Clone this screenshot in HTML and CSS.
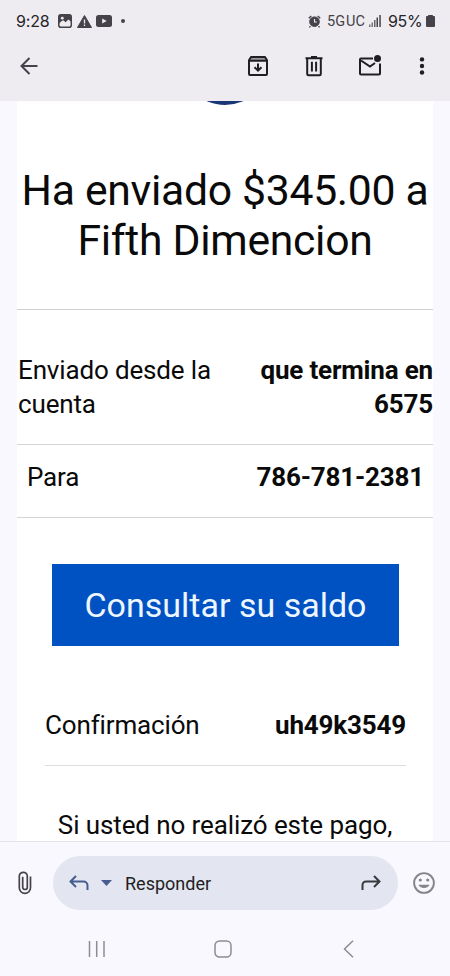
FILE: index.html
```html
<!DOCTYPE html>
<html lang="es">

<head>
    <meta charset="UTF-8">
    <meta name="viewport" content="width=device-width, initial-scale=1.0">
    <title>Correo</title>
    <link rel="stylesheet" href="styles.css">
</head>

<body>
    <header class="top">
        <div class="status-bar">
            <div class="status-left">
                <span class="clock">9:28</span>
                <svg class="icon-photo" width="14" height="14" viewBox="0 0 14 14">
                    <rect x="0.8" y="0.8" width="12.4" height="12.4" rx="2" fill="none" stroke="#454349" stroke-width="1.6"/>
                    <path d="M1 1h12v7l-2.500-2L8 8.500 5 6.500 1 10z" fill="#454349"/>
                    <circle cx="4.300" cy="4.200" r="1.400" fill="#eeecf1"/>
                    <path d="M1.800 11V8.800L5 6.300l2.600 2.200L10.300 5.500l2 1.800V11z" fill="#eeecf1"/>
                </svg>
                <svg class="icon-warning" width="15" height="13" viewBox="0 0 15 13">
                    <path d="M7.500.5L14.500 12.500H.5z" fill="#454349" stroke="#454349" stroke-linejoin="round"/>
                    <path d="M7.500 4.500v4M7.500 9.500v1.500" stroke="#eeecf1" stroke-width="1.3"/>
                </svg>
                <svg class="icon-video" width="16" height="12" viewBox="0 0 16 12">
                    <rect width="16" height="12" rx="2.500" fill="#454349"/>
                    <path d="M6.200 3.500L10.700 6 6.200 8.500z" fill="#eeecf1"/>
                </svg>
                <span class="dot"></span>
            </div>
            <div class="status-right">
                <svg width="13" height="13" viewBox="0 0 13 13" fill="none" stroke="#454349">
                    <circle cx="6.500" cy="6.700" r="4.800" fill="#454349"/>
                    <path d="M.8 3.300L3.300 1M9.700 1l2.500 2.300M2.500 11.200L1.400 12.400M10.500 11.200l1.100 1.200" stroke-width="1.400"/>
                    <path d="M6.500 4v3h2.300" stroke="#eeecf1" stroke-width="1.100"/>
                </svg>
                <span class="network">5G<span class="uc">UC</span></span>
                <svg class="icon-signal" width="12" height="12" viewBox="0 0 12 12" fill="#454349">
                    <rect x="0" y="9.500" width="1.500" height="2.500" opacity=".7"/>
                    <rect x="2.500" y="7.500" width="1.500" height="4.500" opacity=".7"/>
                    <rect x="5" y="5" width="1.500" height="7" opacity=".8"/>
                    <rect x="7.500" y="2.500" width="1.500" height="9.500"/>
                    <rect x="10.300" y="0" width="1.500" height="12"/>
                </svg>
                <span class="battery-level">95%</span>
                <svg class="icon-battery" width="9" height="12" viewBox="0 0 9 12" fill="#454349">
                    <rect x="2" width="5" height="3" rx=".6"/>
                    <rect y="1" width="9" height="11" rx="1"/>
                </svg>
            </div>
        </div>
        <div class="toolbar">
            <svg class="icon-back" width="19" height="18" viewBox="0 0 19 18" fill="none" stroke="#454349" stroke-width="2">
                <path d="M17.500 9H2M9.500 1L1.500 9l8 8"/>
            </svg>
            <div class="actions">
                <svg width="24" height="24" viewBox="0 0 24 24" fill="none" stroke="#1f1e23" stroke-width="2">
                    <path d="M4.500 3h15v4h-15z" fill="#9b999e" stroke="none"/>
                    <path d="M3 6.300L5 3h14l2 3.300V20a1 1 0 0 1-1 1H4a1 1 0 0 1-1-1zM3 6.800h18" stroke-linejoin="round"/>
                    <path d="M12 9.500v7M8.500 13.200l3.500 3.500 3.500-3.500"/>
                </svg>
                <svg width="24" height="24" viewBox="0 0 24 24" fill="none" stroke="#1f1e23" stroke-width="2">
                    <path d="M3.500 4.200h17M9 3.100h6" />
                    <path d="M5.200 4.500V20a1.200 1.200 0 0 0 1.200 1.200h11.200a1.200 1.200 0 0 0 1.200-1.200V4.500M9.900 7.800v9.700M14.100 7.800v9.700"/>
                </svg>
                <svg width="24" height="24" viewBox="0 0 24 24" fill="none" stroke="#1f1e23" stroke-width="2">
                    <path d="M15 4.500H3a1 1 0 0 0-1 1v14a1 1 0 0 0 1 1h18a1 1 0 0 0 1-1V9.500"/>
                    <path d="M3 6.500l9 6 5-3.500"/>
                    <circle cx="19.500" cy="4.500" r="3.500" fill="#1f1e23" stroke="none"/>
                </svg>
                <svg class="icon-more" width="6" height="18" viewBox="0 0 6 18" fill="#1f1e23">
                    <circle cx="3" cy="2.400" r="2.200"/>
                    <circle cx="3" cy="9" r="2.200"/>
                    <circle cx="3" cy="15.500" r="2.200"/>
                </svg>
            </div>
        </div>
    </header>

    <main class="mail">
        <div class="card">
            <div class="logo"></div>
            <h1>Ha enviado $345.00 a<br><span class="payee">Fifth Dimencion</span></h1>
            <div class="row row-account">
                <span class="label">Enviado desde la<br>cuenta</span>
                <strong>que termina en<br>6575</strong>
            </div>
            <div class="row row-to">
                <span class="label">Para</span>
                <strong class="phone">786-781-2381</strong>
            </div>
            <a class="button" href="#">Consultar su saldo</a>
            <div class="row row-confirm">
                <span class="label">Confirmación</span>
                <strong class="code">uh49k3549</strong>
            </div>
            <p class="note">Si usted no realizó este pago,</p>
        </div>
    </main>

    <footer class="bottom">
        <div class="reply-bar">
            <svg class="icon-clip" width="14" height="24" viewBox="0 0 14 24" fill="none" stroke="#454349" stroke-width="1.700">
                <path d="M12.500 5.500v11.300a5.600 5.600 0 0 1-11.200 0V5.300a4 4 0 0 1 8 0v10.900a2.300 2.300 0 0 1-4.600 0V5.800"/>
            </svg>
            <div class="reply">
                <svg width="20" height="16" viewBox="0 0 20 16" fill="none" stroke="#465c91" stroke-width="2">
                    <path d="M7 1L1.500 6.500 7 12M1.500 6.500H14.500a4 4 0 0 1 4 4V15"/>
                </svg>
                <svg class="caret" width="11" height="6" viewBox="0 0 11 6">
                    <path d="M0 0h11L5.500 6z" fill="#465c91"/>
                </svg>
                <span class="reply-text">Responder</span>
                <svg class="icon-forward" width="20" height="16" viewBox="0 0 20 16" fill="none" stroke="#39393f" stroke-width="2">
                    <path d="M13 1l5.500 5.500L13 12M18.500 6.500H5a3.500 3.500 0 0 0-3.500 3.500v5"/>
                </svg>
            </div>
            <svg class="icon-smile" width="22" height="22" viewBox="0 0 22 22" fill="#858489">
                <circle cx="11" cy="11" r="9.900" fill="none" stroke="#858489" stroke-width="1.900"/>
                <circle cx="7.300" cy="8" r="1.600"/>
                <circle cx="14.700" cy="8" r="1.600"/>
                <path d="M5.500 12.800h11a5.700 4.200 0 0 1-11 0z"/>
            </svg>
        </div>
        <div class="nav-bar">
            <svg width="18" height="18" viewBox="0 0 18 18" stroke="#8d8c91" stroke-width="1.500">
                <path d="M1.500 1v16M8.700 1v16M16 1v16"/>
            </svg>
            <svg class="icon-home" width="18" height="18" viewBox="0 0 18 18" fill="none" stroke="#8d8c91" stroke-width="1.500">
                <rect x="1" y="1" width="16" height="16" rx="4.500"/>
            </svg>
            <svg class="icon-nav-back" width="11" height="18" viewBox="0 0 11 18" fill="none" stroke="#8d8c91" stroke-width="1.500">
                <path d="M10 .7L1.500 9l8.500 8.300"/>
            </svg>
        </div>
    </footer>
</body>

</html>
```
FILE: styles.css
```css
* {
    margin: 0;
    padding: 0;
    box-sizing: border-box;
}

body {
    font-family: Roboto, "Liberation Sans", sans-serif;
    background-color: #f9f8fe;
    color: #0a0a0a;
    height: 976px;
    display: flex;
    flex-direction: column;
    overflow: hidden;
}

svg {
    display: block;
    flex-shrink: 0;
}

.top {
    height: 101px;
    background-color: #eeecf1;
}

.status-bar {
    height: 42px;
    padding: 0 15px 0 16px;
    display: flex;
    justify-content: space-between;
    align-items: center;
    font-family: Inter, sans-serif;
}

.status-left,
.status-right {
    display: flex;
    align-items: center;
}

.clock {
    width: 42px;
    font-size: 16px;
    letter-spacing: -0.2px;
    color: #252429;
}

.icon-warning {
    margin-left: 5px;
}

.icon-video {
    margin-left: 4px;
}

.dot {
    width: 4px;
    height: 4px;
    margin-left: 9px;
    border-radius: 50%;
    background-color: #454349;
}

.network {
    width: 38px;
    margin-left: 6px;
    font-family: Roboto, sans-serif;
    font-size: 14.5px;
    font-weight: 400;
    color: #454349;
    white-space: nowrap;
}

.uc {
    margin-left: 1px;
}

.icon-signal {
    margin-left: 4px;
}

.battery-level {
    width: 34px;
    margin-left: 7px;
    font-size: 16px;
    letter-spacing: -0.3px;
    color: #252429;
}

.icon-battery {
    margin-left: 4px;
}

.toolbar {
    height: 48px;
    padding: 0 25px 0 20px;
    display: flex;
    justify-content: space-between;
    align-items: center;
}

.actions {
    display: flex;
    align-items: center;
    gap: 32px;
}

.icon-more {
    margin-left: 5px;
}

.mail {
    height: 740px;
    padding: 0 17px;
    overflow: hidden;
}

.card {
    height: 740px;
    background-color: #ffffff;
    overflow: hidden;
}

/* bottom edge of the bank logo, scrolled out of view */
.logo {
    width: 90px;
    height: 90px;
    margin: -86px auto 0;
    border-radius: 50%;
    background-color: #1b3674;
}

h1 {
    height: 205px;
    padding-top: 60px;
    border-bottom: 1px solid #d0d0d0;
    font-size: 42.7px;
    font-weight: 400;
    line-height: 50px;
    letter-spacing: -0.3px;
    text-align: center;
    white-space: nowrap;
}

.row {
    display: flex;
    justify-content: space-between;
    font-size: 26px;
    line-height: 34px;
    letter-spacing: -0.15px;
    white-space: nowrap;
}

.row .label {
    padding-left: 1px;
}

.row strong {
    font-weight: 700;
    letter-spacing: -0.18px;
    text-align: right;
}

.row-account {
    height: 135px;
    padding-top: 43px;
    border-bottom: 1px solid #d5d5d5;
}

.row-to {
    height: 73px;
    padding: 15px 9px 0;
    border-bottom: 1px solid #d5d5d5;
}

.button {
    display: block;
    width: 347px;
    height: 82px;
    margin: 46px 0 0 35px;
    background-color: #0052c2;
    color: #eef6ff;
    font-size: 34px;
    line-height: 82px;
    text-align: center;
    text-decoration: none;
}

.row-confirm {
    height: 120px;
    margin: 0 27px 0 28px;
    padding-top: 62px;
    border-bottom: 1px solid #dedede;
}

.row-confirm .label {
    padding-left: 0;
}

.note {
    padding-top: 42px;
    font-size: 26px;
    line-height: 34px;
    letter-spacing: -0.1px;
    text-align: center;
    white-space: nowrap;
}

.bottom {
    height: 135px;
    border-top: 1px solid #e4e3e8;
}

.reply-bar {
    padding: 14px 15px 0 18px;
    display: flex;
    align-items: center;
}

.reply {
    width: 345px;
    height: 54px;
    margin-left: 21px;
    padding: 0 17px 0 16px;
    display: flex;
    align-items: center;
    border-radius: 27px;
    background-color: #e3e6f0;
}

.caret {
    margin-left: 12px;
}

.reply-text {
    margin-left: 13px;
    font-size: 18px;
    color: #1f1e23;
}

.icon-forward {
    margin-left: auto;
}

.icon-smile {
    margin-left: auto;
}

.nav-bar {
    padding: 30px 96px 0 88px;
    display: flex;
}

.icon-home {
    margin-left: 108px;
}

.icon-nav-back {
    margin-left: auto;
}
```
